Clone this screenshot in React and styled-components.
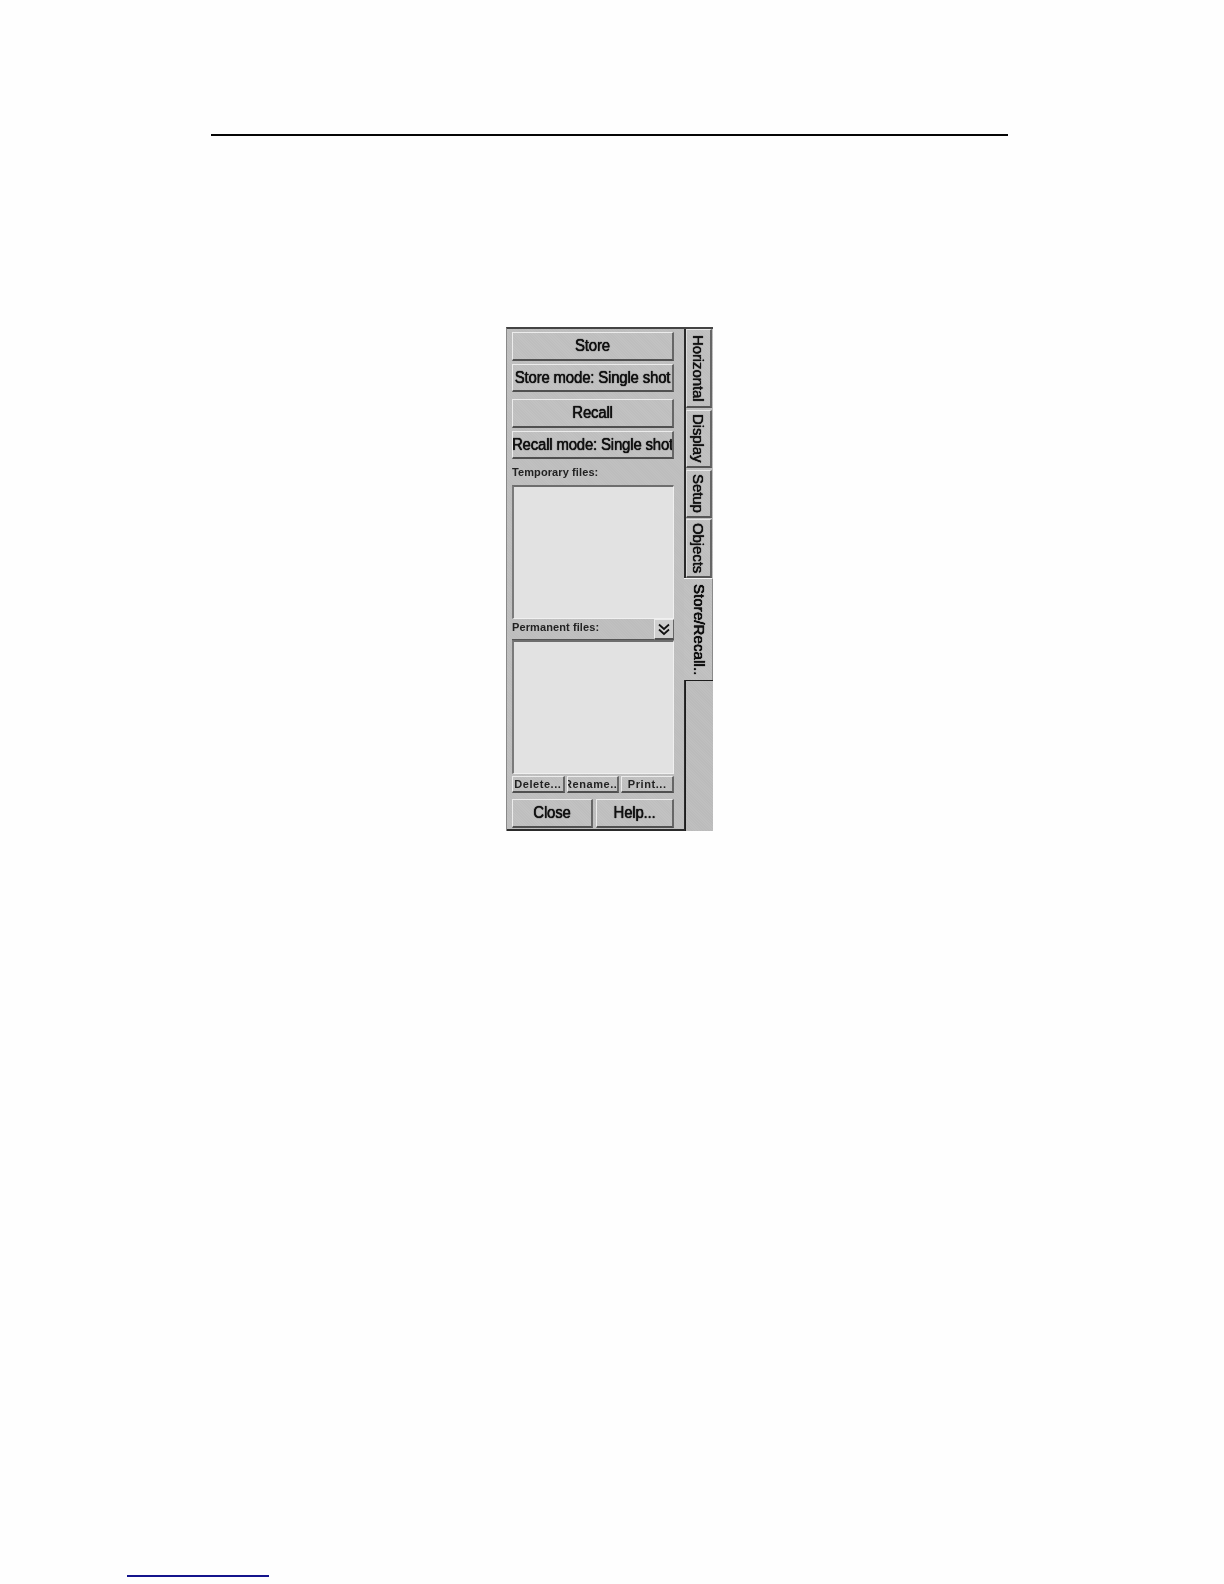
import React from "react";
import styled, { createGlobalStyle, css } from "styled-components";

const Global = createGlobalStyle`
  html, body { margin: 0; padding: 0; background: #fff; }
  * { box-sizing: border-box; }
`;

const dither = (a, b) => css`
  background-color: ${a};
  background-image: repeating-linear-gradient(45deg, ${a} 0 1px, ${b} 1px 2px);
`;

const Page = styled.div`
  width: 1224px;
  height: 1584px;
  overflow: hidden;
  background: #fefefe;
  display: flex;
  flex-direction: column;
  font-family: "Liberation Sans", Arial, sans-serif;
  color: #111;
`;
const TopRule = styled.div`
  margin: 134px 0 0 211px;
  width: 797px;
  height: 2px;
  background: #050505;
`;
const FootRule = styled.div`
  margin: 744px 0 0 127px;
  width: 142px;
  height: 2px;
  background: #14148c;
`;
const Panel = styled.div`
  margin: 191px 0 0 506px;
  width: 207px;
  height: 504px;
  display: flex;
  border-top: 2px solid #444;
  border-left: 1px solid #888;
  filter: blur(0.3px);
  ${dither("#bdbdbd", "#c0c0c0")}
`;
const Main = styled.div`
  width: 179px;
  height: 100%;
  padding: 3px 10px 0 5px;
  display: flex;
  flex-direction: column;
  border-right: 2px solid #2a2a2a;
  border-bottom: 2px solid #2a2a2a;
`;
const raised = css`
  border-style: solid;
  border-width: 1px 2px 2px 1px;
  border-color: #ececec #666 #505050 #ececec;
`;
const Button = styled.div`
  ${raised}
  ${dither("#bebebe", "#c2c2c2")}
  height: ${p => p.$h}px;
  width: ${p => (p.$w ? `${p.$w}px` : "auto")};
  margin-top: ${p => p.$mt || 0}px;
  padding-bottom: ${p => p.$pb ?? 3}px;
  display: flex;
  align-items: center;
  justify-content: center;
  overflow: hidden;
  white-space: nowrap;
  font-size: 15px;
  letter-spacing: -0.2px;
  text-shadow: 0 0 0.8px #111, 0 0 0.8px #111;
`;
const Label = styled.span`
  display: inline-block;
  transform: scaleY(1.1);
`;
const SmallRow = styled.div`
  display: flex;
  gap: 2px;
  margin-top: 2px;
`;
const SmallButton = styled(Button)`
  height: 17px;
  padding-bottom: 0;
  flex: 1 1 0;
  min-width: 0;
  font-size: 11px;
  font-weight: 700;
  letter-spacing: 0.55px;
  color: #222;
  text-shadow: none;
`;
const BottomRow = styled.div`
  display: flex;
  gap: 3px;
  margin-top: 6px;
`;
const GroupLabel = styled.div`
  height: 26px;
  padding-top: 6px;
  font-size: 11px;
  font-weight: 700;
  line-height: 14px;
  letter-spacing: 0.1px;
  color: #222;
`;
const ListBox = styled.div`
  background: #e2e2e2;
  height: ${p => p.$h}px;
  border-style: solid;
  border-width: 2px 1px 1px 2px;
  border-color: #6e6e6e #f0f0f0 #f0f0f0 #7a7a7a;
`;
const PermBar = styled.div`
  height: 21px;
  display: flex;
  align-items: flex-start;
  justify-content: space-between;
  border-bottom: 1px solid #555;
  font-size: 11px;
  font-weight: 700;
  line-height: 14px;
  letter-spacing: 0.1px;
  color: #222;
`;
const PermLabel = styled.span`
  padding-top: 1px;
`;
const ExpandButton = styled.div`
  ${raised}
  border-width: 1px 1px 2px 1px;
  width: 20px;
  height: 21px;
  background: #cfcfcf;
  display: flex;
  align-items: center;
  justify-content: center;
`;
const Tabs = styled.div`
  flex: 1;
  display: flex;
  flex-direction: column;
`;
const Tab = styled.div`
  width: 26px;
  height: ${p => p.$h}px;
  margin-top: ${p => p.$mt || 0}px;
  ${dither("#bebebe", "#c2c2c2")}
  writing-mode: vertical-rl;
  display: flex;
  align-items: center;
  justify-content: center;
  font-size: 15px;
  letter-spacing: -0.1px;
  text-shadow: 0 0 0.8px #111, 0 0 0.8px #111;
  white-space: nowrap;
  border-style: solid;
  border-width: 1px 2px 2px 1px;
  border-color: #e8e8e8 #666 #555 #dcdcdc;
`;
const ActiveTab = styled.div`
  margin-left: -2px;
  width: 29px;
  height: 102px;
  padding-left: 2px;
  ${dither("#bebebe", "#c2c2c2")}
  writing-mode: vertical-rl;
  display: flex;
  align-items: center;
  justify-content: center;
  font-size: 15px;
  letter-spacing: 0.1px;
  text-shadow: 0 0 0.8px #000, 0 0 0.8px #000, 0 0 0.5px #000;
  white-space: nowrap;
  border-top: 1px solid #f4f4f4;
  border-right: 1px solid #8a8a8a;
`;
const TabFiller = styled.div`
  flex: 1;
  border-top: 1px solid #1c1c1c;
  border-left: 1px solid #1c1c1c;
  margin-left: -1px;
  ${dither("#bbbbbb", "#bfbfbf")}
`;

export default function App() {
  return (
    <Page>
      <Global />
      <TopRule />
      <Panel>
        <Main>
          <Button $h={29}><Label>Store</Label></Button>
          <Button $h={28} $mt={3} $pb={2}><Label>Store mode: Single shot</Label></Button>
          <Button $h={29} $mt={7}><Label>Recall</Label></Button>
          <Button $h={28} $mt={3} $pb={2}><Label>Recall mode: Single shot</Label></Button>
          <GroupLabel>Temporary files:</GroupLabel>
          <ListBox $h={134} />
          <PermBar>
            <PermLabel>Permanent files:</PermLabel>
            <ExpandButton>
              <svg width="12" height="13" viewBox="0 0 12 13" fill="none" stroke="#111" strokeWidth="1.7">
                <path d="M1 1.5 6 6 11 1.5" />
                <path d="M1 6.5 6 11 11 6.5" />
              </svg>
            </ExpandButton>
          </PermBar>
          <ListBox $h={134} />
          <SmallRow>
            <SmallButton>Delete...</SmallButton>
            <SmallButton>Rename...</SmallButton>
            <SmallButton>Print...</SmallButton>
          </SmallRow>
          <BottomRow>
            <Button $h={29} $w={81}><Label>Close</Label></Button>
            <Button $h={29} $w={78}><Label>Help...</Label></Button>
          </BottomRow>
        </Main>
        <Tabs>
          <Tab $h={79}>Horizontal</Tab>
          <Tab $h={58} $mt={2}>Display</Tab>
          <Tab $h={48} $mt={2}>Setup</Tab>
          <Tab $h={59} $mt={1}>Objects</Tab>
          <ActiveTab>Store/Recall..</ActiveTab>
          <TabFiller />
        </Tabs>
      </Panel>
      <FootRule />
    </Page>
  );
}
